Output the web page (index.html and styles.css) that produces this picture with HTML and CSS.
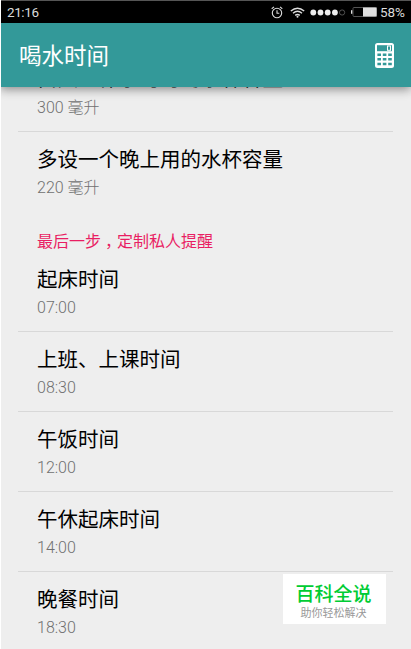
FILE: index.html
```html
<!DOCTYPE html>
<html lang="zh-CN">
<head>
  <meta charset="UTF-8" />
  <meta name="viewport" content="width=device-width, initial-scale=1" />
  <title>喝水时间</title>
  <link rel="stylesheet" href="styles.css">
</head>
<body>
  <div class="screen">
    <div class="status-bar">
      <span class="clock">21:16</span>
      <div class="status-icons">
        <svg class="alarm" width="12" height="13" viewBox="0 0 12 13" fill="none" stroke="#ddd" stroke-width="1.1">
          <circle cx="6" cy="7" r="4.7" />
          <path d="M6 4.2V7.3H8.3M.7 2.7L3 .9M11.3 2.7L9 .9" />
        </svg>
        <svg class="wifi" width="15" height="11" viewBox="0 0 15 11" fill="none" stroke="#ddd" stroke-width="1.4">
          <path d="M.8 4Q7.5-1.6 14.2 4M3 6.3Q7.5 2.4 12 6.3M5.2 8.4Q7.5 6.4 9.8 8.4" />
          <circle cx="7.5" cy="9.7" r="1" fill="#ddd" stroke="none" />
        </svg>
        <svg class="signal" width="36" height="7" viewBox="0 0 36 7" fill="#eee">
          <circle cx="3.3" cy="3.5" r="2.9" />
          <circle cx="10.5" cy="3.5" r="2.9" />
          <circle cx="17.7" cy="3.5" r="2.9" />
          <circle cx="24.9" cy="3.5" r="2.9" />
          <circle cx="32.1" cy="3.5" r="2.6" fill="none" stroke="#666" stroke-width=".8" />
        </svg>
        <svg class="battery" width="26" height="10" viewBox="0 0 26 10">
          <rect x="0" y="3.2" width="1.5" height="3.6" fill="#ddd" />
          <rect x="2" y=".5" width="23.5" height="9" rx="1" fill="none" stroke="#555" />
          <rect x="12" y=".5" width="13.6" height="9" fill="#e0e0e0" />
        </svg>
        <span class="percent">58%</span>
      </div>
    </div>

    <header class="app-bar">
      <h1>喝水时间</h1>
      <svg class="calculator" width="19" height="25" viewBox="0 0 19 25">
        <rect width="19" height="25" rx="2.5" fill="#fff" />
        <rect x="2" y="2.2" width="15" height="6" fill="#339999" />
        <rect x="12.5" y="3" width="3" height="4.3" fill="none" stroke="#fff" />
        <path d="M2.4 11.7H6M7.8 11.7H11.4M13.2 11.7H16.8M2.4 16.3H6M7.8 16.3H11.4M13.2 16.3H16.8M2.4 21H6M7.8 21H11.4M13.2 21H16.8" stroke="#339999" stroke-width="2.4" />
      </svg>
    </header>

    <main class="settings">
      <div class="item item-first">
        <div class="name">白天工作学习时的水杯容量</div>
        <div class="value">300 毫升</div>
      </div>
      <div class="item item-last">
        <div class="name">多设一个晚上用的水杯容量</div>
        <div class="value">220 毫升</div>
      </div>
      <h2 class="section-title">最后一步<span class="comma">，</span>定制私人提醒</h2>
      <div class="item item-top">
        <div class="name">起床时间</div>
        <div class="value">07:00</div>
      </div>
      <div class="item">
        <div class="name">上班、上课时间</div>
        <div class="value">08:30</div>
      </div>
      <div class="item">
        <div class="name">午饭时间</div>
        <div class="value">12:00</div>
      </div>
      <div class="item">
        <div class="name">午休起床时间</div>
        <div class="value">14:00</div>
      </div>
      <div class="item item-last">
        <div class="name">晚餐时间</div>
        <div class="value">18:30</div>
      </div>
    </main>

    <div class="badge">
      <div class="badge-title">百科全说</div>
      <div class="badge-text">助你轻松解决</div>
    </div>
  </div>
</body>
</html>
```

FILE: styles.css
```css
* {
  box-sizing: border-box;
}
body {
  margin: 0;
  font-family: Roboto, "Noto Sans CJK SC", sans-serif;
  background-color: #eee;
}
.screen {
  position: relative;
  display: flex;
  flex-direction: column;
  height: 649px;
  overflow: hidden;
  border-left: 1px solid #fff;
}
.status-bar {
  display: flex;
  flex: none;
  justify-content: space-between;
  align-items: center;
  height: 23px;
  margin-left: -1px;
  padding: 0 6px 0 7px;
  border-top: 1px solid #555;
  background: #000;
  color: #ddd;
  font-size: 13.5px;
  line-height: 20px;
}
.clock {
  letter-spacing: -0.4px;
}
.status-icons {
  display: flex;
  align-items: center;
}
.wifi {
  margin-left: 7px;
}
.signal {
  margin-left: 5px;
}
.battery {
  margin-left: 5px;
}
.percent {
  margin-left: 3px;
}
.app-bar {
  display: flex;
  flex: none;
  z-index: 1;
  justify-content: space-between;
  align-items: center;
  height: 64px;
  margin-left: -1px;
  padding: 0 17px 0 19px;
  background: #339999;
  box-shadow: 0 2px 10px rgba(0,0,0,0.45);
}
h1 {
  margin: 0;
  padding-top: 2px;
  color: #fff;
  font-size: 22.5px;
  font-weight: 400;
  line-height: 32px;
}
.settings {
  flex: none;
  margin: -22px 18px 0 17px;
}
.item {
  height: 80px;
  padding: 14px 0 0 19px;
  border-bottom: 1px solid #d8d8d8;
}
.item-first {
  height: 67px;
  padding-top: 0;
}
.item-first .value {
  padding-top: 1px;
}
.item-top {
  height: 76px;
  padding-top: 10px;
}
.item-last {
  border-bottom: none;
}
.name {
  color: #000;
  font-size: 20.5px;
  line-height: 28px;
}
.value {
  color: #707070;
  font-size: 16px;
  font-weight: 300;
  line-height: 27px;
}
.section-title {
  height: 44px;
  margin: 0;
  padding: 18px 0 0 19px;
  color: #e91e63;
  font-size: 16px;
  font-weight: 400;
  line-height: 24px;
}
.comma {
  padding-left: 4px;
  letter-spacing: -4px;
}
.badge {
  position: absolute;
  left: 282px;
  top: 574px;
  z-index: 2;
  width: 103px;
  height: 50px;
  padding: 8px 2px 0 0;
  background: #fff;
  text-align: center;
}
.badge-title {
  color: #0c3;
  font-size: 19px;
  font-weight: 500;
  line-height: 26px;
}
.badge-text {
  color: #999;
  font-size: 11px;
  line-height: 11px;
}
```
